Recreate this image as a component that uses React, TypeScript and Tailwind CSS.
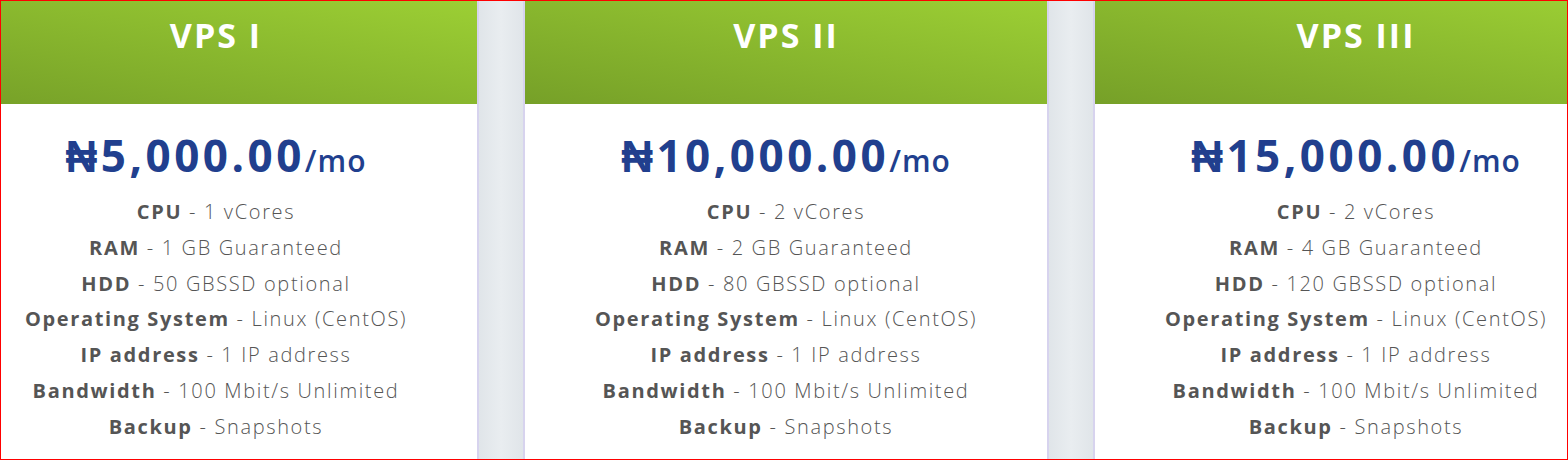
const plans = [
  {
    name: "VPS I",
    price: "₦5,000.00",
    specs: [
      ["CPU", "1 vCores"],
      ["RAM", "1 GB Guaranteed"],
      ["HDD", "50 GBSSD optional"],
      ["Operating System", "Linux (CentOS)"],
      ["IP address", "1 IP address"],
      ["Bandwidth", "100 Mbit/s Unlimited"],
      ["Backup", "Snapshots"],
    ],
  },
  {
    name: "VPS II",
    price: "₦10,000.00",
    specs: [
      ["CPU", "2 vCores"],
      ["RAM", "2 GB Guaranteed"],
      ["HDD", "80 GBSSD optional"],
      ["Operating System", "Linux (CentOS)"],
      ["IP address", "1 IP address"],
      ["Bandwidth", "100 Mbit/s Unlimited"],
      ["Backup", "Snapshots"],
    ],
  },
  {
    name: "VPS III",
    price: "₦15,000.00",
    specs: [
      ["CPU", "2 vCores"],
      ["RAM", "4 GB Guaranteed"],
      ["HDD", "120 GBSSD optional"],
      ["Operating System", "Linux (CentOS)"],
      ["IP address", "1 IP address"],
      ["Bandwidth", "100 Mbit/s Unlimited"],
      ["Backup", "Snapshots"],
    ],
  },
];

function Spacer() {
  return (
    <div className="w-[48px] shrink-0 border-x-2 border-[#d7d3ee] bg-[linear-gradient(to_right,#e0e5e9,#e9edf0_50%,#e0e5e9)]" />
  );
}

function PlanCard({ plan }: { plan: (typeof plans)[number] }) {
  return (
    <div className="w-[522px] shrink-0 bg-white flex flex-col">
      <div className="h-[103px] pt-[12px] bg-[linear-gradient(to_top_right,#76a028,#9ccf34)] text-center">
        <h2 className="text-white font-bold text-[34px] leading-[44px] tracking-[2px]">{plan.name}</h2>
      </div>
      <div className="pt-[23px] text-center">
        <div className="text-[#213f8e] font-bold leading-[56px]">
          <span className="text-[44px] tracking-[3.5px]">{plan.price}</span>
          <span className="text-[30px] font-semibold tracking-[1px]">/mo</span>
        </div>
        <ul className="text-[#555555] text-[20px] tracking-[1.65px]">
          {plan.specs.map(([label, value]) => (
            <li key={label} className="leading-[35.8px]">
              <span className="font-bold">{label}</span>
              <span className="font-light"> - {value}</span>
            </li>
          ))}
        </ul>
      </div>
    </div>
  );
}

export default function App() {
  return (
    <div className="w-[1568px] h-[460px] overflow-hidden border border-[#ff0000] bg-white font-['Open_Sans',sans-serif]">
      <div className="flex h-full -ml-[46px]">
        <PlanCard plan={plans[0]} />
        <Spacer />
        <PlanCard plan={plans[1]} />
        <Spacer />
        <PlanCard plan={plans[2]} />
      </div>
    </div>
  );
}
